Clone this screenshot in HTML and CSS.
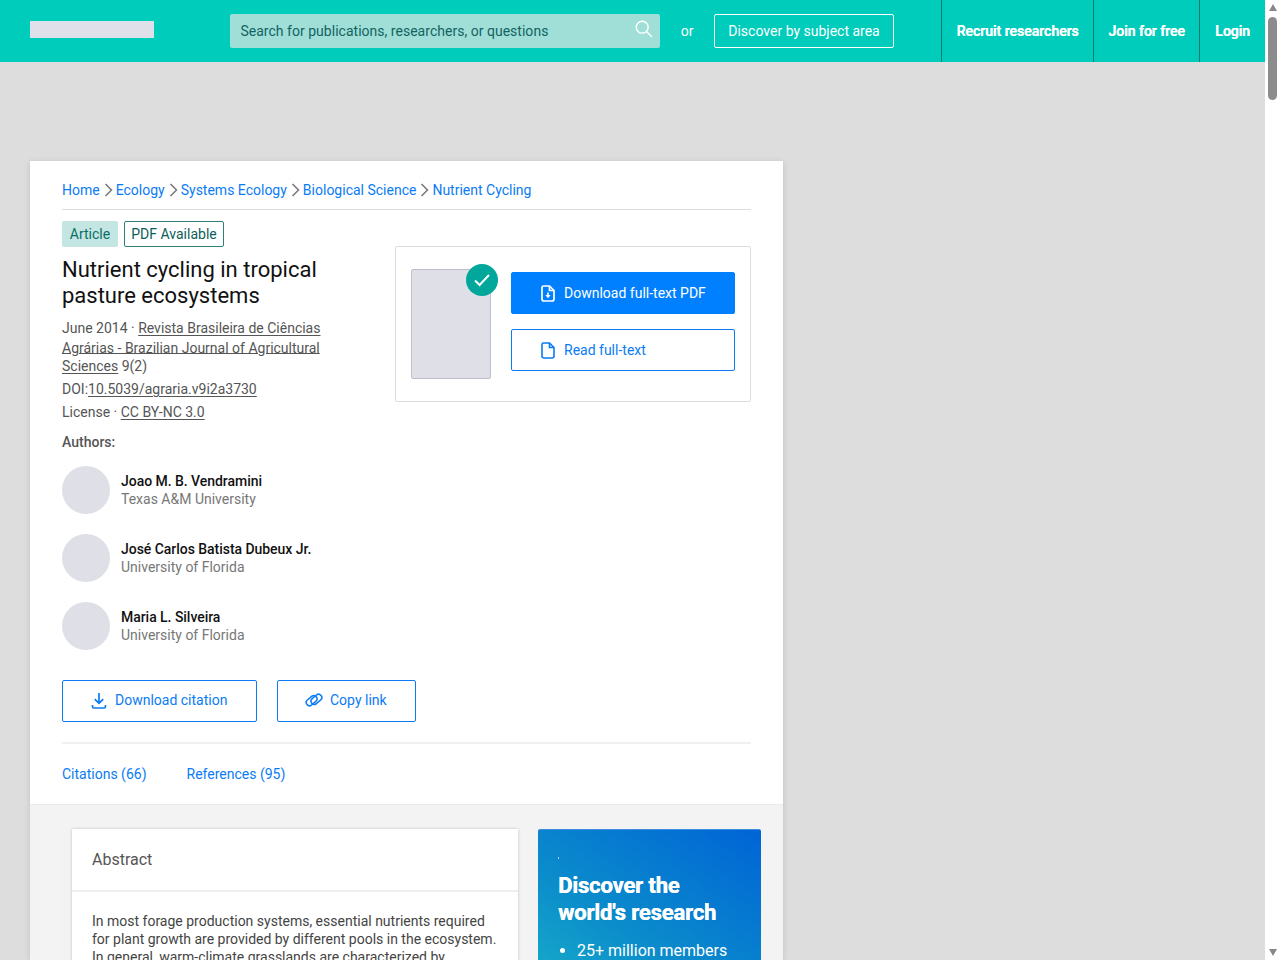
FILE: index.html
```html
<!DOCTYPE html>
<html lang="en">
<head>
    <meta charset="UTF-8">
    <meta name="viewport" content="width=device-width, initial-scale=1.0">
    <title>Nutrient cycling in tropical pasture ecosystems</title>
    <link rel="stylesheet" href="styles.css">
</head>
<body>
    <div class="page">
        <header class="topbar">
            <div class="logo"></div>
            <div class="search">
                <span>Search for publications, researchers, or questions</span>
                <svg class="search-icon" width="18" height="18" viewBox="0 0 20 20" fill="none" stroke="#fff" stroke-width="1.6"><circle cx="8" cy="8" r="6.6"/><path d="M12.8 12.8l6 6"/></svg>
            </div>
            <span class="or">or</span>
            <a class="discover" href="#">Discover by subject area</a>
            <nav class="topnav">
                <a class="nav-recruit" href="#">Recruit researchers</a>
                <a class="nav-join" href="#">Join for free</a>
                <a class="nav-login" href="#">Login</a>
            </nav>
        </header>

        <main class="content">
            <section class="card">
                <div class="card-top">
                    <div class="crumbs">
                        <a href="#">Home</a><svg class="chev" width="9" height="14" viewBox="0 0 9 14" fill="none" stroke="#777" stroke-width="1.5"><path d="M1.5 1l6 6-6 6"/></svg>
                        <a href="#">Ecology</a><svg class="chev" width="9" height="14" viewBox="0 0 9 14" fill="none" stroke="#777" stroke-width="1.5"><path d="M1.5 1l6 6-6 6"/></svg>
                        <a href="#">Systems Ecology</a><svg class="chev" width="9" height="14" viewBox="0 0 9 14" fill="none" stroke="#777" stroke-width="1.5"><path d="M1.5 1l6 6-6 6"/></svg>
                        <a href="#">Biological Science</a><svg class="chev" width="9" height="14" viewBox="0 0 9 14" fill="none" stroke="#777" stroke-width="1.5"><path d="M1.5 1l6 6-6 6"/></svg>
                        <a href="#">Nutrient Cycling</a>
                    </div>

                    <div class="head-row">
                        <div class="meta-col">
                            <div class="tags">
                                <span class="tag tag-fill">Article</span>
                                <span class="tag tag-line">PDF Available</span>
                            </div>
                            <h1 class="title">Nutrient cycling in tropical pasture ecosystems</h1>
                            <div class="meta meta-journal">June 2014 · <a href="#">Revista Brasileira de Ciências <span class="line-low">Agrárias - Brazilian Journal of Agricultural</span> Sciences</a> 9(2)</div>
                            <div class="meta meta-doi">DOI:<a href="#">10.5039/agraria.v9i2a3730</a></div>
                            <div class="meta meta-license">License · <a href="#">CC BY-NC 3.0</a></div>
                        </div>
                        <div class="pdf-box">
                            <div class="thumb">
                                <span class="badge">
                                    <svg width="18" height="14" viewBox="0 0 18 14" fill="none" stroke="#fff" stroke-width="2"><path d="M2 7.5l4.6 4.5L16 2"/></svg>
                                </span>
                            </div>
                            <div class="pdf-btns">
                                <a class="btn btn-solid" href="#">
                                    <svg width="14" height="17" viewBox="0 0 14 17" fill="none" stroke="#fff" stroke-width="1.7"><path d="M2.5 1h6L13 5.500V14a2 2 0 0 1-2 2H3a2 2 0 0 1-2-2V2.500A1.500 1.500 0 0 1 2.500 1z"/><path d="M8.500 1v4.500H13"/><path d="M7 7.500v3" stroke-width="1.600"/><path d="M4.300 10h5.400L7 13.200z" fill="#fff" stroke="none"/></svg>
                                    Download full-text PDF
                                </a>
                                <a class="btn" href="#">
                                    <svg width="14" height="17" viewBox="0 0 14 17" fill="none" stroke="#0a7bf5" stroke-width="1.600"><path d="M2.500 1h6L13 5.500V14a2 2 0 0 1-2 2H3a2 2 0 0 1-2-2V2.500A1.500 1.500 0 0 1 2.500 1z"/><path d="M8.500 1v4.500H13"/></svg>
                                    Read full-text
                                </a>
                            </div>
                        </div>
                    </div>

                    <div class="authors-label">Authors:</div>
                    <div class="authors">
                        <div class="author">
                            <div class="avatar"></div>
                            <div><div class="author-name">Joao M. B. Vendramini</div><div class="author-inst">Texas A&amp;M University</div></div>
                        </div>
                        <div class="author">
                            <div class="avatar"></div>
                            <div><div class="author-name">José Carlos Batista Dubeux Jr.</div><div class="author-inst">University of Florida</div></div>
                        </div>
                        <div class="author">
                            <div class="avatar"></div>
                            <div><div class="author-name">Maria L. Silveira</div><div class="author-inst">University of Florida</div></div>
                        </div>
                    </div>

                    <div class="actions">
                        <a class="btn btn-cite" href="#">
                            <svg width="16" height="17" viewBox="0 0 16 17" fill="none" stroke="#0a7bf5" stroke-width="1.700"><path d="M8 1v10M3.800 7.200L8 11.400l4.200-4.200"/><path d="M1.500 13v1.500a1.500 1.500 0 0 0 1.500 1.500h10a1.500 1.500 0 0 0 1.500-1.500V13"/></svg>
                            Download citation
                        </a>
                        <a class="btn btn-copy" href="#">
                            <svg width="18" height="14" viewBox="0 0 18 14" fill="none" stroke="#0a7bf5" stroke-width="1.500"><rect x="0.600" y="4.450" width="12" height="6.500" rx="3.250" transform="rotate(-40 6.600 7.700)"/><rect x="5.400" y="3.050" width="12" height="6.500" rx="3.250" transform="rotate(-40 11.400 6.300)"/></svg>
                            Copy link
                        </a>
                    </div>

                    <div class="tabs">
                        <a href="#">Citations (66)</a>
                        <a href="#">References (95)</a>
                    </div>
                </div>

                <div class="card-lower">
                    <article class="abstract">
                        <h2 class="abstract-head">Abstract</h2>
                        <p class="abstract-body">In most forage production systems, essential nutrients required for plant growth are provided by different pools in the ecosystem. In general, warm-climate grasslands are characterized by</p>
                    </article>
                    <aside class="promo">
                        <div class="promo-mark"></div>
                        <h2 class="promo-title">Discover the world's research</h2>
                        <ul class="promo-list">
                            <li>25+ million members</li>
                        </ul>
                    </aside>
                </div>
            </section>
        </main>
    </div>

    <div class="scrollbar">
        <span class="arrow-up"></span>
        <span class="thumb-bar"></span>
        <span class="spacer"></span>
        <span class="arrow-down"></span>
    </div>
</body>
</html>
```

FILE: styles.css
```css
*{margin: 0;padding: 0;box-sizing: border-box;}
html,body{height: 960px;overflow: hidden;}
body{display: flex;font-family: Roboto, "Liberation Sans", sans-serif;font-size: 14px;color: #555;background: #fff;}
a{text-decoration: none;color: inherit;}
.page{width: 1265px;height: 960px;overflow: hidden;background: #ddd;}

/* top bar */
.topbar{height: 62px;background: #00ccbb;display: flex;align-items: center;padding-left: 30px;color: #fff;}
.logo{width: 124px;height: 17px;background: #e0e0ea;margin: 0 76.5px 3px 0;}
.search{width: 430px;height: 34px;background: #9fdfd8;border-radius: 2px;display: flex;align-items: center;justify-content: space-between;padding: 0 7px 0 10px;color: #14635f;font-size: 14px;letter-spacing: .02px;}
.search-icon{margin-top: -5px;}
.or{margin: 0 20.5px 0 20.5px;font-size: 14px;}
.discover{width: 180px;height: 34px;border: 1px solid #fff;border-radius: 2px;display: flex;align-items: center;justify-content: center;font-size: 14px;margin-right: 47px;}
.topnav{display: flex;height: 62px;}
.topnav a{display: flex;align-items: center;justify-content: center;height: 62px;border-left: 1px solid #087a70;font-size: 14px;font-weight: 500;text-shadow: .5px 0 0 #fff;}
.nav-recruit{width: 152px;}
.nav-join{width: 106px;}
.nav-login{width: 66px;}

/* main card */
.content{padding: 99px 0 0 30px;}
.card{width: 753px;background: #fff;box-shadow: 0 1px 6px rgba(0,0,0,.12);}
.card-top{padding: 21px 32px 0;height: 643px;}
.crumbs{display: flex;align-items: center;height: 28px;padding-bottom: 11px;border-bottom: 1px solid #ddd;color: #0a7bf5;white-space: nowrap;}
.chev{margin: 0 3px 0 4px;}
.head-row{display: flex;justify-content: space-between;margin-top: 11px;height: 197px;}
.meta-col{width: 265px;}
.tags{display: flex;gap: 6px;height: 26px;}
.tag{display: flex;align-items: center;justify-content: center;height: 26px;border-radius: 2px;color: #0a6e68;}
.tag-fill{width: 56px;background: #c3e6e2;}
.tag-line{width: 100px;border: 1px solid #2f7f7a;color: #0b5e5a;}
.title{font-size: 22px;font-weight: 400;line-height: 26px;color: #111;margin-top: 10px;}
.meta{line-height: 18px;color: #555;}
.meta a{text-decoration: underline;text-underline-offset: 2px;}
.line-low{vertical-align: -2px;}
.meta-journal{margin-top: 10px;width: 265px;}
.meta-doi{margin-top: 5px;}
.meta-license{margin-top: 5px;}
.pdf-box{display: flex;width: 356px;height: 156px;margin-top: 25px;border: 1px solid #ddd;border-radius: 2px;padding: 22px 15px 0;}
.thumb{position: relative;width: 80px;height: 110px;background: #dfdfe8;border: 1px solid #bfbfc9;border-radius: 2px;margin-right: 20px;}
.badge{position: absolute;top: -6px;right: -8px;width: 32px;height: 32px;border-radius: 50%;background: #00a79a;display: flex;align-items: center;justify-content: center;}
.pdf-btns{display: flex;flex-direction: column;gap: 15px;margin-top: 3px;}
.btn{display: flex;align-items: center;gap: 10px;height: 42px;border: 1px solid #0a7bf5;border-radius: 2px;color: #0a7bf5;font-size: 14px;}
.pdf-btns .btn{width: 224px;padding-left: 29px;gap: 9px;}
.btn-solid{background: #0080ff;border-color: #0080ff;color: #fff;}
.authors-label{margin-top: 15px;font-weight: 500;line-height: 18px;color: #555;}
.authors{display: flex;flex-direction: column;gap: 20px;margin-top: 15px;}
.author{display: flex;align-items: center;gap: 11px;height: 48px;}
.avatar{width: 48px;height: 48px;border-radius: 50%;background: #dfdfe8;}
.author-name{font-weight: 500;color: #111;line-height: 18px;letter-spacing: -.04px;}
.author-inst{color: #777;line-height: 18px;}
.actions{display: flex;gap: 20px;margin-top: 30px;}
.actions .btn{padding-bottom: 2px;}
.btn-cite{width: 195px;padding-left: 28px;gap: 8px;}
.btn-copy{width: 139px;padding-left: 27px;gap: 7px;}
.tabs{display: flex;gap: 40px;margin-top: 20px;border-top: 2px solid #f0f0f0;padding-top: 21px;color: #0a7bf5;line-height: 18px;}

/* lower grey part */
.card-lower{display: flex;gap: 20px;height: 156px;background: #f3f3f3;border-top: 1px solid #ebebeb;padding: 24px 22px 0 42px;overflow: hidden;}
.abstract{width: 446px;height: 200px;background: #fff;box-shadow: 0 0 3px rgba(0,0,0,.2);}
.abstract-head{height: 63px;padding: 21px 20px 0;border-bottom: 2px solid #eee;font-size: 16px;font-weight: 400;line-height: 20px;color: #555;}
.abstract-body{padding: 20px 20px 0;line-height: 18px;color: #444;}
.promo{width: 223px;height: 200px;border-top: 1px solid #3c8fe0;border-radius: 2px 2px 0 0;background: linear-gradient(215deg, #0064d6 0%, #0b8ccb 55%, #1cb8c8 100%);color: #fff;padding: 27px 20px 0;}
.promo-mark{width: 1px;height: 2px;margin-bottom: 13px;background: rgba(255,255,255,.6);}
.promo-title{font-size: 22px;font-weight: 700;line-height: 27px;letter-spacing: -.15px;text-shadow: .4px 0 0 #fff;}
.promo-list{margin-top: 15px;padding-left: 19px;font-size: 16px;line-height: 20px;}

/* scrollbar */
.scrollbar{width: 15px;height: 960px;background: #fff;display: flex;flex-direction: column;align-items: center;}
.arrow-up{width: 0;height: 0;margin-top: 4px;border-left: 4px solid transparent;border-right: 4px solid transparent;border-bottom: 7px solid #888;}
.thumb-bar{width: 9px;height: 83px;margin-top: 6px;border-radius: 5px;background: #8c8c8c;}
.spacer{flex: 1;}
.arrow-down{width: 0;height: 0;margin-bottom: 4px;border-left: 4px solid transparent;border-right: 4px solid transparent;border-top: 7px solid #888;}
```
